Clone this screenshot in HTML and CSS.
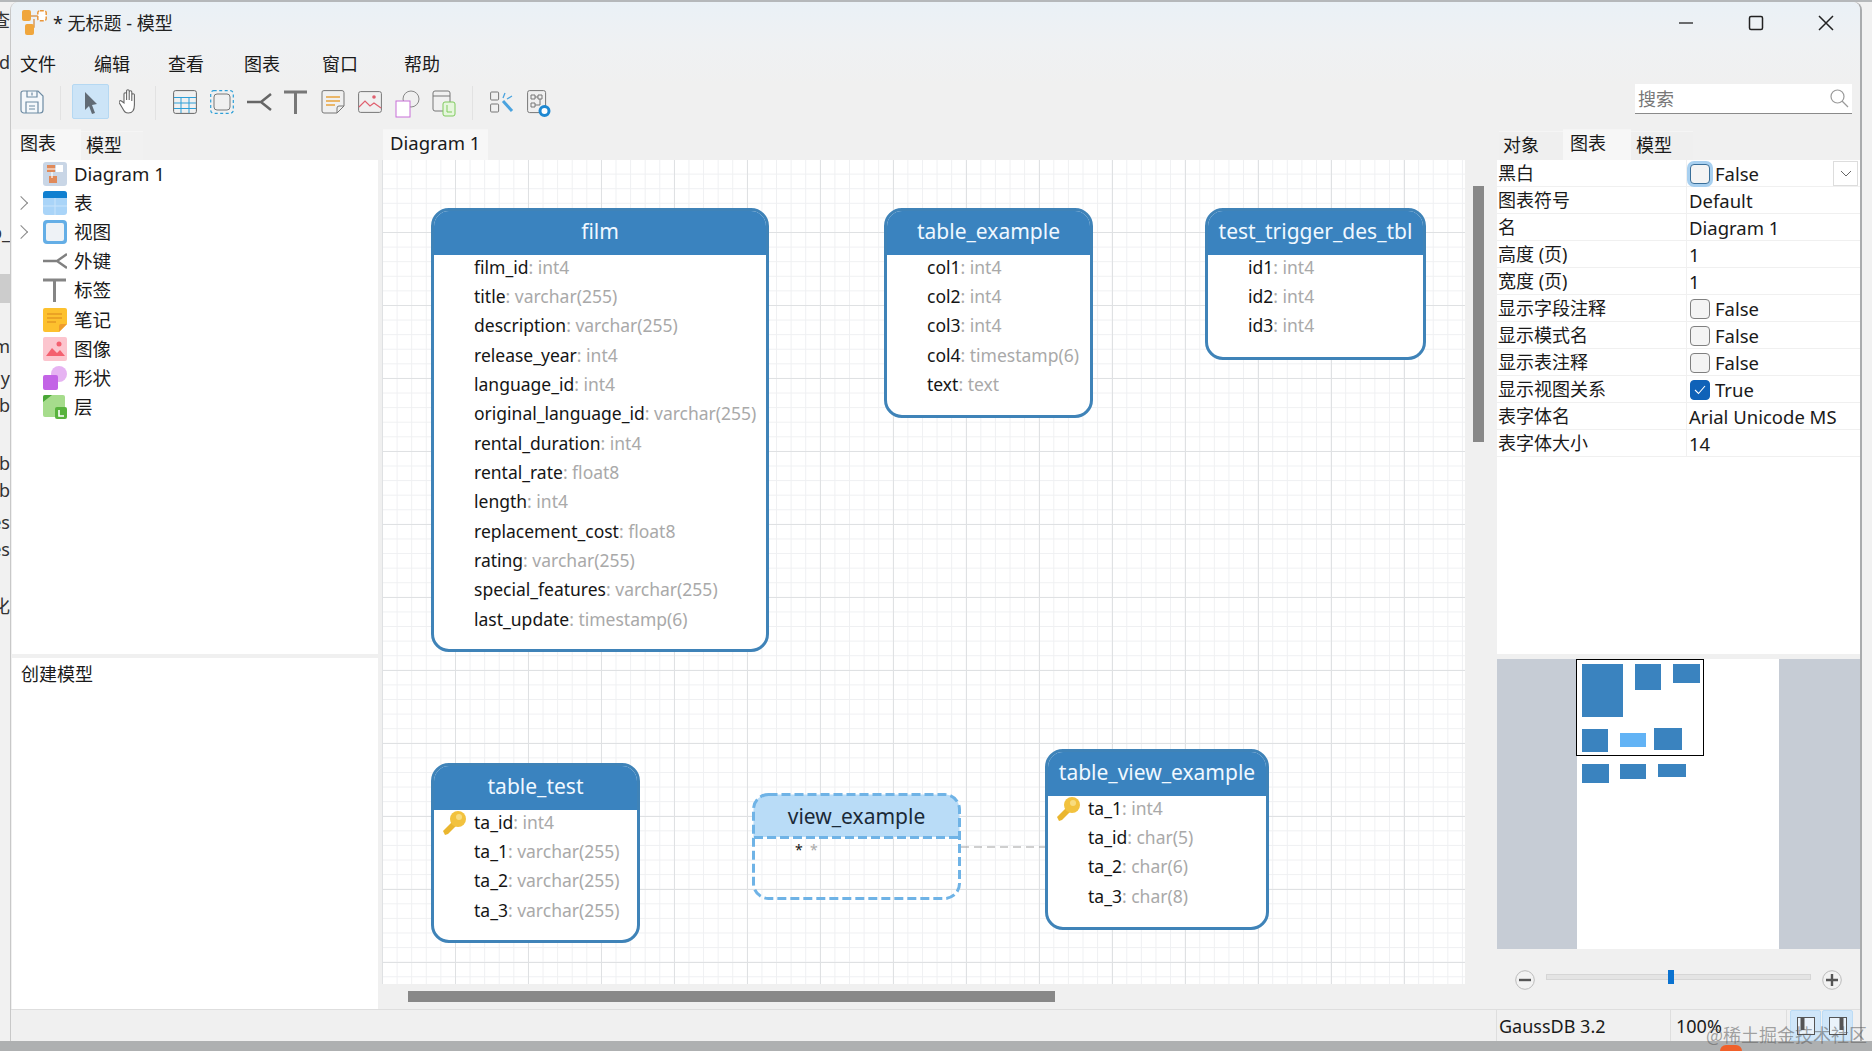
FILE: index.html
```html
<!DOCTYPE html>
<html lang="zh">
<head>
<meta charset="utf-8">
<title>无标题 - 模型</title>
<link rel="stylesheet" href="styles.css">
</head>
<body>
<div class="desk">
  <span class="peek p1">查</span><span class="peek p2">d</span><span class="peek p3">b_</span><span class="peek p4">m</span><span class="peek p5">y</span><span class="peek p6">ub</span><span class="peek p7">ub</span><span class="peek p8">ub</span><span class="peek p9">es</span><span class="peek p10">es</span><span class="peek p11">化</span>
  <div class="peek-sel"></div>
</div>
<div class="blob"></div>
<div class="window">
  <header class="titlebar">
    <svg class="appicon" width="25" height="25" viewBox="0 0 25 25"><path d="M9 6h7M12 9v8H9" fill="none" stroke="#d99a5a" stroke-width="1.5"/><rect x="0" y="0" width="9" height="11" rx="2" fill="#f0a63c"/><rect x="15.800" y="0.800" width="8.400" height="10" rx="2" fill="#fff" stroke="#e9963a" stroke-width="1.500" stroke-dasharray="4 1.500"/><rect x="3" y="14" width="9" height="11" rx="2" fill="#f0a63c"/></svg>
    <span class="title">* 无标题 - 模型</span>
    <div class="winctl">
      <svg width="16" height="16" viewBox="0 0 16 16"><path d="M1 8h14" stroke="#222" stroke-width="1.300"/></svg>
      <svg width="16" height="16" viewBox="0 0 16 16"><rect x="1.500" y="1.500" width="13" height="13" rx="1.500" fill="none" stroke="#222" stroke-width="1.500"/></svg>
      <svg width="16" height="16" viewBox="0 0 16 16"><path d="M1 1l14 14M15 1L1 15" stroke="#222" stroke-width="1.500"/></svg>
    </div>
  </header>
  <nav class="menubar">
    <span class="m1">文件</span><span class="m2">编辑</span><span class="m3">查看</span><span class="m4">图表</span><span class="m5">窗口</span><span class="m6">帮助</span>
  </nav>
  <div class="toolbar">
    <svg class="ti t-save" width="24" height="24" viewBox="0 0 24 24" fill="none" stroke="#6d8ba3" stroke-width="1.200"><path d="M3 1h15l5 5v14a3 3 0 0 1-3 3H4a3 3 0 0 1-3-3V3a2 2 0 0 1 2-2z" fill="#f4f8fb"/><path d="M7 1v6h10V1M12 2.500v3M6 23V12h12v11M9 16h6M9 19h6"/></svg>
    <i class="sep s1"></i>
    <div class="tool-on"><svg width="16" height="26" viewBox="0 0 16 26"><path d="M2 3l12 12-5 1 3 8-3 1-3-8-4 4z" fill="#616b75"/></svg></div>
    <svg class="ti t-hand" width="21" height="26" viewBox="0 0 21 26" fill="#fff" stroke="#666" stroke-width="1.100"><path d="M5 15V6a1.300 1.300 0 0 1 2.600 0v6V3a1.300 1.300 0 0 1 2.600 0v9V4a1.300 1.300 0 0 1 2.600 0v9V7a1.300 1.300 0 0 1 2.600 0v10c0 5-2 8-6 8-3 0-4-1-6-5l-3-5c-1-2 1-3 2-2z"/></svg>
    <i class="sep s2"></i>
    <svg class="ti t-table" width="24" height="24" viewBox="0 0 24 24" fill="none"><rect x="0.600" y="0.600" width="22.800" height="22.800" rx="2" stroke="#666"/><path d="M1 7.500h22M1 13h22M1 18.500h22M8 7.500V23M16 7.500V23" stroke="#2d9fd8"/></svg>
    <svg class="ti" width="24" height="24" viewBox="0 0 24 24" fill="none"><rect x="0.700" y="0.700" width="22.600" height="22.600" rx="3" stroke="#2d9fd8" stroke-width="1.200" stroke-dasharray="3 2.500"/><rect x="4" y="4" width="16" height="16" rx="3" stroke="#777"/></svg>
    <svg class="ti t-fk" width="25" height="24" viewBox="0 0 25 24" fill="none" stroke="#666" stroke-width="2.500"><path d="M0 12h14M24 4l-10 8 10 8"/></svg>
    <svg class="ti t-t" width="23" height="24" viewBox="0 0 23 24" fill="none" stroke="#777" stroke-width="3"><path d="M0 2h23M11.500 2v22"/></svg>
    <svg class="ti" width="24" height="24" viewBox="0 0 24 24" fill="none"><path d="M3 .6h18a2 2 0 0 1 2 2V16l-7 7H3a2 2 0 0 1-2-2V3A2 2 0 0 1 3 .6z" stroke="#777"/><path d="M5 7h14M5 11h14M5 15h9" stroke="#e8a33d" stroke-width="1.300"/><path d="M16 23v-5a2 2 0 0 1 2-2h5" stroke="#777"/></svg>
    <svg class="ti" width="24" height="24" viewBox="0 0 24 24" fill="none"><rect x="0.600" y="1.600" width="22.800" height="20.800" rx="2" stroke="#777"/><path d="M1 17l6-6 5 5 4-3 7 5" stroke="#e0606f" stroke-width="1.200"/><circle cx="16" cy="7" r="1.800" fill="#e0606f"/></svg>
    <svg class="ti t-shape" width="25" height="28" viewBox="0 0 25 28" fill="none"><circle cx="16" cy="9" r="8" stroke="#888"/><rect x="1" y="11" width="14" height="16" fill="#fff" stroke="#c86fd8"/></svg>
    <svg class="ti" width="24" height="27" viewBox="0 0 24 27" fill="none"><path d="M3 1h13a2 2 0 0 1 2 2v18H3a2 2 0 0 1-2-2V3a2 2 0 0 1 2-2zM1 6h17" stroke="#777"/><rect x="11" y="12" width="12" height="14" rx="2" fill="#e6f6dd" stroke="#7ecb5c"/><path d="M15 15v7h5" stroke="#7ecb5c"/></svg>
    <i class="sep s3"></i>
    <svg class="ti t-tools" width="24" height="24" viewBox="0 0 24 24" fill="none"><rect x="0.600" y="2" width="8" height="8" rx="1" stroke="#777"/><rect x="0.600" y="14" width="8" height="8" rx="1" stroke="#777"/><path d="M13 8l2-5M17 9l5-3" stroke="#4aa3df" stroke-width="1.300"/><path d="M13 11l9 10" stroke="#4aa3df" stroke-width="3"/></svg>
    <svg class="ti" width="24" height="28" viewBox="0 0 24 28" fill="none"><rect x="0.600" y="0.600" width="18" height="22" rx="2" stroke="#777"/><path d="M4 5h4v4H4zM11 5h4v4h-4zM4 13h4v4H4zM8 7h3M13 9v6H8" stroke="#777"/><circle cx="17.500" cy="21" r="4.500" stroke="#1e88d2" stroke-width="3" fill="#fff"/></svg>
    <label class="search"><span>搜索</span><svg width="19" height="19" viewBox="0 0 19 19" fill="none" stroke="#9a9a9a" stroke-width="1.200"><circle cx="7.500" cy="7.500" r="6.500"/><path d="M12 12l6 6"/></svg></label>
  </div>
  <main class="main">
    <section class="col-left">
      <div class="tabs">
        <span class="tab on t-a">图表</span><span class="tab t-b">模型</span>
      </div>
      <ul class="tree">
        <li><i class="chev"></i><svg width="24" height="24" viewBox="0 0 24 24"><rect width="24" height="24" rx="3" fill="#c9d6e6"/><rect x="4" y="3" width="8" height="7" fill="#e08a5a"/><rect x="13" y="3" width="7" height="7" fill="#fff"/><rect x="6" y="14" width="8" height="7" fill="#e08a5a"/><path d="M4 7h16M9 10v6" stroke="#fff" stroke-width="1.200"/></svg><span>Diagram 1</span></li>
        <li><i class="chev show"></i><svg width="24" height="24" viewBox="0 0 24 24"><rect width="24" height="24" rx="3" fill="#a9d4f8"/><path d="M0 7V3a3 3 0 0 1 3-3h18a3 3 0 0 1 3 3v4z" fill="#0f7fd0"/><path d="M0 15h24M12 7v17" stroke="#c9e4fb"/></svg><span>表</span></li>
        <li><i class="chev show"></i><svg width="24" height="24" viewBox="0 0 24 24"><rect width="24" height="24" rx="4" fill="#64aee6"/><rect x="3" y="3" width="18" height="18" rx="2" fill="#eef2f6"/></svg><span>视图</span></li>
        <li><i class="chev"></i><svg width="24" height="24" viewBox="0 0 24 24" fill="none" stroke="#808080" stroke-width="2.400"><path d="M0 12h14M24 5l-10 7 10 7"/></svg><span>外键</span></li>
        <li><i class="chev"></i><svg width="24" height="24" viewBox="0 0 24 24" fill="none" stroke="#858585" stroke-width="3"><path d="M0 2h23M11.500 2v22"/></svg><span>标签</span></li>
        <li><i class="chev"></i><svg width="24" height="24" viewBox="0 0 24 24"><path d="M2 0h20a2 2 0 0 1 2 2v14l-8 8H2a2 2 0 0 1-2-2V2a2 2 0 0 1 2-2z" fill="#fdc12e"/><path d="M4 6h15M4 10h15M4 14h9" stroke="#d9861a" stroke-width="1.200"/><path d="M16 24v-6a2 2 0 0 1 2-2h6z" fill="#ef9c2c"/></svg><span>笔记</span></li>
        <li><i class="chev"></i><svg width="24" height="24" viewBox="0 0 24 24"><rect width="24" height="24" rx="2" fill="#fcc5ce"/><path d="M3 19l6-8 5 5 3-3 5 6z" fill="#f4606f"/><circle cx="16" cy="7" r="2.500" fill="#f4606f"/></svg><span>图像</span></li>
        <li><i class="chev"></i><svg width="24" height="24" viewBox="0 0 24 24"><circle cx="16" cy="8" r="8" fill="#e6b3f2"/><rect y="9" width="15" height="15" rx="2" fill="#c364e6"/></svg><span>形状</span></li>
        <li><i class="chev"></i><svg width="24" height="24" viewBox="0 0 24 24"><path d="M2 0h18a2 2 0 0 1 2 2v20H2a2 2 0 0 1-2-2V2a2 2 0 0 1 2-2z" fill="#a6dc8c"/><path d="M0 7V2a2 2 0 0 1 2-2h7z" fill="#49a637"/><rect x="12" y="12" width="12" height="12" rx="2" fill="#58b33d"/><path d="M16 15v6h5" fill="none" stroke="#fff" stroke-width="1.600"/></svg><span>层</span></li>
      </ul>
      <div class="hint">创建模型</div>
    </section>
    <section class="col-center">
      <div class="tabs"><span class="tab on t-d">Diagram 1</span></div>
      <div class="stage">
        <div class="canvas">
          <article class="tbl film">
            <h3>film</h3>
            <ul>
              <li><i></i><b>film_id</b><em>: int4</em></li>
              <li><i></i><b>title</b><em>: varchar(255)</em></li>
              <li><i></i><b>description</b><em>: varchar(255)</em></li>
              <li><i></i><b>release_year</b><em>: int4</em></li>
              <li><i></i><b>language_id</b><em>: int4</em></li>
              <li><i></i><b>original_language_id</b><em>: varchar(255)</em></li>
              <li><i></i><b>rental_duration</b><em>: int4</em></li>
              <li><i></i><b>rental_rate</b><em>: float8</em></li>
              <li><i></i><b>length</b><em>: int4</em></li>
              <li><i></i><b>replacement_cost</b><em>: float8</em></li>
              <li><i></i><b>rating</b><em>: varchar(255)</em></li>
              <li><i></i><b>special_features</b><em>: varchar(255)</em></li>
              <li><i></i><b>last_update</b><em>: timestamp(6)</em></li>
            </ul>
          </article>
          <article class="tbl texample">
            <h3>table_example</h3>
            <ul>
              <li><i></i><b>col1</b><em>: int4</em></li>
              <li><i></i><b>col2</b><em>: int4</em></li>
              <li><i></i><b>col3</b><em>: int4</em></li>
              <li><i></i><b>col4</b><em>: timestamp(6)</em></li>
              <li><i></i><b>text</b><em>: text</em></li>
            </ul>
          </article>
          <article class="tbl ttrigger">
            <h3>test_trigger_des_tbl</h3>
            <ul>
              <li><i></i><b>id1</b><em>: int4</em></li>
              <li><i></i><b>id2</b><em>: int4</em></li>
              <li><i></i><b>id3</b><em>: int4</em></li>
            </ul>
          </article>
          <article class="tbl ttest">
            <h3>table_test</h3>
            <ul>
              <li><i><svg class="key" width="26" height="26" viewBox="0 0 26 26"><path d="M2 21l9-9 4 4-8 8-3 1z" fill="#eab62f"/><circle cx="17" cy="9" r="8" fill="#f2c23e"/><circle cx="18" cy="7" r="3" fill="#f8dc80"/></svg></i><b>ta_id</b><em>: int4</em></li>
              <li><i></i><b>ta_1</b><em>: varchar(255)</em></li>
              <li><i></i><b>ta_2</b><em>: varchar(255)</em></li>
              <li><i></i><b>ta_3</b><em>: varchar(255)</em></li>
            </ul>
          </article>
          <article class="vexample">
            <svg class="dashes" width="209" height="107" viewBox="0 0 209 107" fill="none" stroke="#6fb3e6" stroke-width="3">
              <path d="M1.500 44V16A14.500 14.500 0 0 1 16 1.500H193A14.500 14.500 0 0 1 207.500 16V44z" fill="#b9dcf7" stroke="none"/>
              <rect x="1.500" y="1.500" width="206" height="104" rx="15" stroke-dasharray="9 4"/>
              <path d="M2 44.500H207" stroke-dasharray="9 4"/>
            </svg>
            <h3>view_example</h3>
            <ul>
              <li><i></i><b>*</b><em>  *</em></li>
            </ul>
          </article>
          <svg class="link" width="84" height="2" viewBox="0 0 84 2"><path d="M0 1H84" stroke="#a0a0a0" stroke-width="1.200" stroke-dasharray="8 5"/></svg>
          <article class="tbl tvexample">
            <h3>table_view_example</h3>
            <ul>
              <li><i><svg class="key" width="26" height="26" viewBox="0 0 26 26"><path d="M2 21l9-9 4 4-8 8-3 1z" fill="#eab62f"/><circle cx="17" cy="9" r="8" fill="#f2c23e"/><circle cx="18" cy="7" r="3" fill="#f8dc80"/></svg></i><b>ta_1</b><em>: int4</em></li>
              <li><i></i><b>ta_id</b><em>: char(5)</em></li>
              <li><i></i><b>ta_2</b><em>: char(6)</em></li>
              <li><i></i><b>ta_3</b><em>: char(8)</em></li>
            </ul>
          </article>
        </div>
        <div class="vtrack"><div class="vthumb"></div></div>
        <div class="htrack"><div class="hthumb"></div></div>
      </div>
    </section>
    <aside class="col-right">
      <div class="tabs">
        <span class="tab t-o">对象</span><span class="tab on t-c">图表</span><span class="tab t-m">模型</span>
      </div>
      <div class="props">
        <div class="row"><span class="k">黑白</span><span class="v"><i class="cb focus"></i>False</span><span class="drop"><svg width="12" height="8" viewBox="0 0 12 8" fill="none" stroke="#666"><path d="M1 1l5 5 5-5"/></svg></span></div>
        <div class="row"><span class="k">图表符号</span><span class="v">Default</span></div>
        <div class="row"><span class="k">名</span><span class="v">Diagram 1</span></div>
        <div class="row"><span class="k">高度 (页)</span><span class="v">1</span></div>
        <div class="row"><span class="k">宽度 (页)</span><span class="v">1</span></div>
        <div class="row"><span class="k">显示字段注释</span><span class="v"><i class="cb"></i>False</span></div>
        <div class="row"><span class="k">显示模式名</span><span class="v"><i class="cb"></i>False</span></div>
        <div class="row"><span class="k">显示表注释</span><span class="v"><i class="cb"></i>False</span></div>
        <div class="row"><span class="k">显示视图关系</span><span class="v"><i class="cb checked"><svg width="12" height="10" viewBox="0 0 12 10" fill="none" stroke="#fff" stroke-width="1.100"><path d="M1 5l3.500 3.500L11 1"/></svg></i>True</span></div>
        <div class="row"><span class="k">表字体名</span><span class="v">Arial Unicode MS</span></div>
        <div class="row"><span class="k">表字体大小</span><span class="v">14</span></div>
      </div>
      <svg class="preview" width="363" height="290" viewBox="0 0 363 290">
        <rect width="363" height="290" fill="#c6ccd5"/>
        <rect x="80" y="0" width="202" height="290" fill="#fff"/>
        <g fill="#3a83bf">
          <rect x="85" y="5" width="41" height="53"/><rect x="138" y="5" width="26" height="26"/><rect x="176" y="5" width="27" height="19"/>
          <rect x="85" y="70" width="26" height="23"/><rect x="157" y="69" width="28" height="22"/>
          <rect x="85" y="105" width="27" height="19"/><rect x="123" y="105" width="26" height="15"/><rect x="161" y="105" width="28" height="13"/>
        </g>
        <rect x="123" y="74" width="26" height="14" fill="#62b3f5"/>
        <rect x="79.500" y="0.500" width="127" height="96" fill="none" stroke="#000" stroke-width="1"/>
      </svg>
      <div class="zoombar">
        <svg width="20" height="20" viewBox="0 0 20 20"><circle cx="10" cy="10" r="9.300" fill="#f2f2f2" stroke="#bbb"/><path d="M4 10h12" stroke="#555" stroke-width="2.400"/></svg>
        <div class="slider"><div class="knob"></div></div>
        <svg width="20" height="20" viewBox="0 0 20 20"><circle cx="10" cy="10" r="9.300" fill="#f2f2f2" stroke="#bbb"/><path d="M4 10h12M10 4v12" stroke="#555" stroke-width="2.400"/></svg>
      </div>
    </aside>
  </main>
  <footer class="status">
    <span class="st-blank"></span>
    <span class="st-db">GaussDB 3.2</span>
    <span class="st-pct">100%</span>
    <span class="st-btn"><svg width="18" height="18" viewBox="0 0 18 18" fill="none" stroke="#555"><rect x="0.500" y="0.500" width="17" height="17" fill="#eaf3fb"/><path d="M5.500 1v12" stroke-width="4"/></svg></span>
    <span class="st-btn"><svg width="18" height="18" viewBox="0 0 18 18" fill="none" stroke="#555"><rect x="0.500" y="0.500" width="17" height="17" fill="#eaf3fb"/><path d="M12.500 1v12" stroke-width="4"/></svg></span>
    <span class="watermark">@稀土掘金技术社区</span>
  </footer>
</div>
</body>
</html>
```
FILE: styles.css
```css
* { box-sizing: border-box; }
html, body { margin: 0; height: 100%; }
body {
  width: 1872px; height: 1051px; overflow: hidden; position: relative;
  background: linear-gradient(#b5b8ba 0, #b5b8ba 2px, #f1f1f1 2px, #f1f1f1 1041px, #aeb0b1 1041px);
  font-family: "Noto Sans", "Noto Sans CJK SC", sans-serif;
  font-size: 18px; color: #1a1a1a;
  padding: 2px 0 0 10px;
}
ul { list-style: none; margin: 0; padding: 0; }
i, em { font-style: normal; }
b { font-weight: 400; }

/* things of other windows, showing at the window edge */
.desk { position: absolute; left: 0; top: 0; width: 10px; height: 1051px; overflow: hidden; }
.peek { position: absolute; right: 0; font-size: 18px; line-height: 24px; color: #333; white-space: nowrap; }
.p1 { top: 8px; } .p2 { top: 50px; } .p3 { top: 220px; } .p4 { top: 334px; } .p5 { top: 366px; }
.p6 { top: 393px; } .p7 { top: 451px; } .p8 { top: 478px; } .p9 { top: 510px; } .p10 { top: 537px; } .p11 { top: 594px; }
.peek-sel { position: absolute; left: 0; top: 274px; width: 10px; height: 29px; background: #ccc; }
.blob { position: absolute; left: 1720px; top: 1045px; width: 22px; height: 6px; background: #f0602a; border-radius: 6px 6px 0 0; }

.window {
  width: 1852px; height: 1039px; display: flex; flex-direction: column;
  background: #f0f0f0; border-radius: 8px 8px 0 0; position: relative;
  border-left: 1px solid #c8c8c8; border-right: 2px solid #a9abad;
}
.titlebar {
  height: 42px; flex: none; display: flex; align-items: center; padding-left: 11px;
  background: linear-gradient(#eaf1f6, #eff1f3); border-radius: 8px 8px 0 0;
}
.appicon { flex: none; margin: -2px 6px 0 0; }
.title { font-size: 18px; line-height: 24px; color: #222; }
.winctl { margin-left: auto; display: flex; gap: 54px; margin-right: 26px; }
.menubar {
  height: 40px; flex: none; display: flex; align-items: center; padding-left: 9px;
  background: linear-gradient(#eff1f3, #f0f0f0);
}
.menubar span { line-height: 24px; }
.m2, .m3 { margin-left: 38px; } .m4 { margin-left: 40px; } .m5 { margin-left: 42px; } .m6 { margin-left: 46px; }

.toolbar { height: 45px; flex: none; display: flex; align-items: flex-start; padding: 0 8px 0 9px; position: relative; }
.ti { flex: none; margin: 6px 13px 0 0; }
.t-save { margin-right: 0; }
.t-fk { margin-right: 12px; }
.t-t { margin-right: 14px; }
.t-shape { margin-right: 12px; }
.sep { flex: none; width: 1px; height: 34px; margin-top: 2px; background: #e2e2e2; }
.s1 { margin: 2px 11px 0 16px; }
.s2 { margin: 2px 17px 0 16px; }
.s3 { margin: 2px 17px 0 3px; }
.tool-on {
  flex: none; width: 37px; height: 35px; margin-right: 10px; display: flex; align-items: center; justify-content: center;
  background: #cce4f7; border: 1px solid #b5d8f2; border-radius: 2px;
}
.t-hand { margin: 4px -1px 0 0; }
.search {
  margin-left: auto; width: 217px; height: 30px; display: flex; align-items: center; justify-content: space-between;
  padding: 0 3px 0 3px; background: #fff; border-bottom: 1px solid #8a8a8a; color: #777;
}
.search span { line-height: 24px; }

.main { flex: none; height: 880px; display: grid; grid-template-columns: 371px 1115px 363px; }
.col-left, .col-center, .col-right { display: flex; flex-direction: column; min-width: 0; }
.col-left { padding: 0 4px 0 1px; }
.tabs { height: 31px; flex: none; display: flex; align-items: flex-end; }
.tab { height: 29px; display: flex; align-items: center; background: #efefef; border-top: 1px solid #f5f5f5; line-height: 24px; padding-bottom: 2px; }
.tab.on { height: 31px; background: #f7f7f7; padding-bottom: 4px; }
.t-a { width: 69px; padding-left: 8px; } .t-b { width: 62px; background: #f1f1f1; padding-left: 5px; }
.t-d { width: 105px; margin-left: 1px; font-size: 18.500px; padding-left: 7px; }
.t-o { width: 64px; margin-left: 2px; padding-left: 4px; } .t-c { width: 68px; padding-left: 7px; } .t-m { width: 62px; padding-left: 5px; }

.tree { height: 494px; flex: none; background: #fff; padding-top: 0; }
.tree li { height: 29.200px; display: flex; align-items: center; }
.tree li:first-child { margin-top: -1px; }
.chev { width: 31px; flex: none; height: 12px; position: relative; }
.chev.show::after {
  content: ""; position: absolute; left: 4px; top: 1px; width: 9px; height: 9px;
  border-top: 1.500px solid #888; border-right: 1.500px solid #888; transform: rotate(45deg);
}
.tree svg { flex: none; }
.tree span { margin-left: 7px; line-height: 24px; font-size: 18.600px; }
.hint { flex: 1; margin-top: 4px; background: #fff; padding: 4px 9px; line-height: 24px; }

.stage { flex: 1; display: grid; grid-template: 824px 1fr / 1083px 1fr; }
.canvas {
  position: relative; overflow: hidden; background-color: #fff;
  background-image:
    linear-gradient(#dfe1e3 1px, transparent 1px),
    linear-gradient(90deg, #dfe1e3 1px, transparent 1px),
    linear-gradient(#eff0f2 1px, transparent 1px),
    linear-gradient(90deg, #eff0f2 1px, transparent 1px);
  background-size: 73px 73px, 73px 73px, 14.600px 14.600px, 14.600px 14.600px;
  background-position: 0 72px, 0 0, 0 72px, 0 0;
}
.vtrack { padding: 26px 0 0 8px; }
.vthumb { width: 11px; height: 256px; background: #888; }
.htrack { padding: 7px 0 0 26px; }
.hthumb { width: 647px; height: 11px; background: #888; }

.tbl { position: absolute; background: #fff; border: 3px solid #3f83b8; border-radius: 18px; overflow: hidden; }
.tbl h3, .vexample h3 {
  margin: 0; height: 44px; padding-bottom: 4px; display: flex; align-items: center; justify-content: center;
  background: #3a83bf; color: #f0f8ff; font-weight: 400; font-size: 21px; line-height: 28px; white-space: nowrap;
}
.tbl ul { margin-top: -3px; }
.tbl li, .vexample li { height: 29.330px; display: flex; align-items: center; font-size: 17.500px; line-height: 24px; white-space: pre; }
.tbl li i, .vexample li i { flex: none; width: 40px; height: 26px; position: relative; }
.tbl b, .vexample b { color: #151515; }
.tbl em, .vexample em { color: #a9a9a9; }
.key { position: absolute; left: 7px; top: 1px; }
.film { left: 49px; top: 48px; width: 338px; height: 444px; }
.texample { left: 502px; top: 48px; width: 209px; height: 210px; }
.ttrigger { left: 823px; top: 48px; width: 221px; height: 152px; }
.ttest { left: 49px; top: 603px; width: 209px; height: 180px; }
.vexample { position: absolute; left: 370px; top: 633px; width: 209px; height: 107px; padding: 3px; background: transparent; }
.dashes { position: absolute; left: 0; top: 0; }
.vexample > * { position: relative; }
.vexample > .dashes { position: absolute; }
.vexample h3 { background: transparent; color: #1b2a38; height: 42px; padding-bottom: 3px; }
.vexample ul { margin-top: -3px; }
.vexample li { font-size: 14px; }
.tvexample { left: 663px; top: 589px; width: 224px; height: 181px; }
.link { position: absolute; left: 579px; top: 686px; }

.props { height: 494px; flex: none; background: #fff; }
.row { height: 27px; display: flex; align-items: center; border-bottom: 1px solid #f0f0f0; position: relative; }
.k { width: 190px; flex: none; padding: 1px 0 0 1px; line-height: 24px; border-right: 1px solid #f0f0f0; height: 26px; white-space: nowrap; }
.v { display: flex; align-items: center; padding: 1px 0 0 2px; line-height: 24px; white-space: nowrap; font-size: 18.500px; }
.cb { width: 20px; height: 20px; margin: 0 5px 0 1px; border: 1px solid #808080; border-radius: 4px; background: #f4f4f4; display: flex; align-items: center; justify-content: center; }
.cb.focus { border-color: #3a6f99; box-shadow: 0 0 0 3px #a8d0f0; }
.cb.checked { background: #0f62b8; border-color: #0f62b8; margin-right: 5px; }
.drop { position: absolute; right: 2px; top: 1px; width: 25px; height: 25px; display: flex; align-items: center; justify-content: center; background: #fff; border: 1px solid #ddd; }
.preview { display: block; flex: none; margin-top: 5px; }
.zoombar { flex: 1; display: flex; align-items: center; gap: 11px; padding: 2px 0 0 18px; }
.slider { width: 265px; height: 6px; margin-top: -7px; background: #e4e4e4; border: 1px solid #d6d6d6; position: relative; }
.knob { position: absolute; left: 121px; top: -5px; width: 6px; height: 14px; background: #0a72d0; }

.status { flex: none; height: 32px; display: flex; align-items: center; border-top: 1px solid #dedede; position: relative; }
.status span { height: 31px; display: flex; align-items: center; line-height: 24px; }
.st-blank { width: 1485px; }
.st-db { width: 174px; padding-left: 2px; border-left: 1px solid #dedede; }
.st-pct { width: 117px; padding-left: 5px; border-left: 1px solid #dedede; border-right: 1px solid #dedede; }
.st-btn { width: 31px; margin-left: 1px; justify-content: center; background: #cfe6f9; border: 1px solid #bcdcf5; border-radius: 2px; }
.st-pct + .st-btn { margin-left: 3px; }
.status .watermark { position: absolute; left: 1695px; top: 8px; color: rgba(90, 90, 90, .55); font-family: "Noto Sans CJK SC", serif; font-size: 18px; white-space: nowrap; }
```
